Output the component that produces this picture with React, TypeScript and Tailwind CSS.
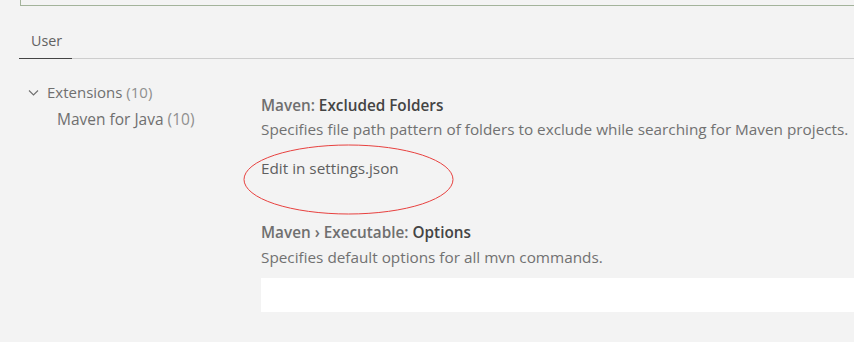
import React from "react";

export default function App() {
  return (
    <div
      className="relative w-[854px] h-[342px] overflow-hidden bg-[#f3f3f3]"
      style={{ fontFamily: "'Open Sans', 'Noto Sans', sans-serif" }}
    >
      {/* search box (cut off at top) */}
      <div className="ml-[20px] h-[6px] border-l border-b border-[#a3b39b]" />

      {/* tabs */}
      <div className="ml-[19px] mt-[25px] flex border-b border-[#cdcdcd]">
        <div className="w-[53px] pl-[12px] pb-[7px] -mb-px border-b border-[#444444] text-[14.3px] leading-[20px] text-[#616161]">
          User
        </div>
      </div>

      {/* body */}
      <div className="flex">
        <div className="w-[261px] shrink-0 pt-[22px] text-[15px] leading-[22px]">
          <div className="flex items-center pl-[28px] text-[#6f6f6f]">
            <svg width="11" height="11" viewBox="0 0 11 11" className="mr-[8px]">
              <path d="M1 3.5 L5.5 8 L10 3.5" fill="none" stroke="#6f6f6f" strokeWidth="1.1" />
            </svg>
            <span>
              Extensions <span className="text-[#8f8f8f]">(10)</span>
            </span>
          </div>
          <div className="mt-[5px] pl-[57px] text-[15.5px] text-[#6f6f6f]">
            Maven for Java <span className="text-[#8f8f8f]">(10)</span>
          </div>
        </div>

        <div className="flex-1 pt-[36px] text-[15.3px] leading-[20px]">
          <div className="font-semibold text-[#6f6f6f]">
            Maven: <span className="text-[#444444]">Excluded Folders</span>
          </div>
          <div className="mt-[4px] text-[#717171] whitespace-nowrap">
            Specifies file path pattern of folders to exclude while searching for Maven projects.
          </div>
          <div className="mt-[19px] text-[#5f5f5f]">Edit in settings.json</div>
          <div className="mt-[44px] font-semibold text-[#6f6f6f]">
            Maven › Executable: <span className="text-[#444444]">Options</span>
          </div>
          <div className="mt-[5px] text-[#717171]">
            Specifies default options for all mvn commands.
          </div>
          <div className="mt-[11px] h-[34px] bg-white" />
        </div>
      </div>

      {/* red annotation ellipse */}
      <svg
        className="absolute left-0 top-0 pointer-events-none"
        width="854"
        height="342"
      >
        <ellipse cx="348.5" cy="179.5" rx="104.5" ry="34.5" fill="none" stroke="#e8413f" strokeWidth="1" />
      </svg>
    </div>
  );
}
